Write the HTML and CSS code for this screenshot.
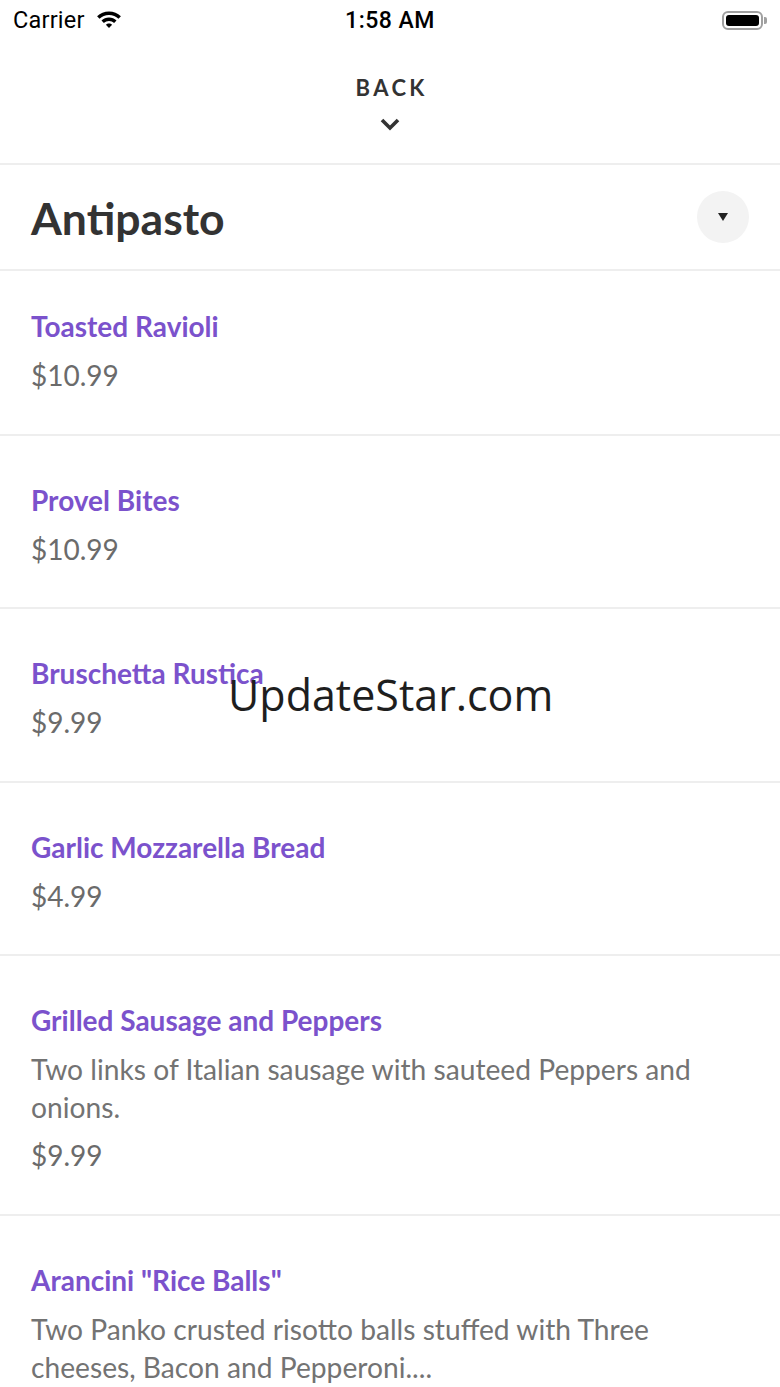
FILE: index.html
```html
<!DOCTYPE html>
<html lang="en">

<head>
    <meta charset="UTF-8">
    <meta name="viewport" content="width=device-width, initial-scale=1">
    <title>Menu - Antipasto</title>
    <link rel="stylesheet" href="styles.css">
</head>

<body>

    <!-- Barra de status -->
    <div class="status-bar">
        <div class="status-left">
            <span class="carrier">Carrier</span>
            <svg class="wifi" width="28" height="20" viewBox="0 0 28 20">
                <path d="M14 2.5c4.6 0 8.8 1.8 11.9 4.8l-2.4 2.5C21 7.4 17.7 6 14 6S7 7.4 4.5 9.8L2.1 7.3C5.2 4.3 9.4 2.5 14 2.5z" fill="#000" />
                <path d="M14 8.6c2.9 0 5.5 1.1 7.5 3l-2.4 2.5c-1.3-1.3-3.1-2-5.1-2s-3.8.7-5.1 2l-2.4-2.5c2-1.9 4.6-3 7.5-3z" fill="#000" />
                <path d="M14 14.6c1.2 0 2.3.5 3.1 1.2L14 19l-3.1-3.2c.8-.7 1.9-1.2 3.1-1.2z" fill="#000" />
            </svg>
        </div>
        <div class="status-time">1:58 AM</div>
        <div class="status-right">
            <div class="battery">
                <div class="battery-fill"></div>
            </div>
            <div class="battery-nub"></div>
        </div>
    </div>

    <!-- Voltar -->
    <div class="back-bar">
        <span class="back-label">BACK</span>
        <svg class="back-chevron" width="22" height="14" viewBox="0 0 22 14">
            <path d="M3 3l8 8 8-8" fill="none" stroke="#333" stroke-width="3.6" />
        </svg>
    </div>

    <!-- Categoria -->
    <div class="category-header">
        <h1 class="category-title">Antipasto</h1>
        <button class="category-toggle">
            <svg width="12" height="10" viewBox="0 0 12 10">
                <path d="M1 1h10L6 9z" fill="#222" />
            </svg>
        </button>
    </div>

    <div class="menu-list" id="menuList">
        <!-- Preenchido via JS -->
    </div>

    <div class="watermark">UpdateStar.com</div>

    <script>
        const items = [
            { nome: "Toasted Ravioli", preco: "$10.99" },
            { nome: "Provel Bites", preco: "$10.99" },
            { nome: "Bruschetta Rustica", preco: "$9.99" },
            { nome: "Garlic Mozzarella Bread", preco: "$4.99" },
            { nome: "Grilled Sausage and Peppers", desc: "Two links of Italian sausage with sauteed Peppers and onions.", preco: "$9.99" },
            { nome: "Arancini \"Rice Balls\"", desc: "Two Panko crusted risotto balls stuffed with Three cheeses, Bacon and Pepperoni....", preco: "$8.99" }
        ];

        function renderMenu(data) {
            const list = document.getElementById('menuList');
            list.innerHTML = '';
            data.forEach(item => {
                const nome = item.nome.replace(/"/g, '&quot;');
                list.innerHTML += `
          <div class="menu-item">
            <div class="item-name">${nome}</div>
            ${item.desc ? `<div class="item-desc">${item.desc}</div>` : ''}
            <div class="item-price">${item.preco}</div>
          </div>`;
            });
        }

        renderMenu(items);
    </script>

</body>

</html>
```

FILE: styles.css
```css
* {
    margin: 0;
    padding: 0;
    box-sizing: border-box;
}

body {
    font-family: 'Lato', 'Noto Sans', sans-serif;
    background: #ffffff;
    color: #333333;
    width: 780px;
    height: 1387px;
    overflow: hidden;
    position: relative;
}

.status-bar {
    height: 40px;
    display: flex;
    align-items: center;
    justify-content: space-between;
    padding: 0 13px;
    font-family: 'Roboto', 'Liberation Sans', sans-serif;
    color: #000000;
    position: relative;
}

.status-left {
    display: flex;
    align-items: center;
    gap: 10px;
}

.carrier {
    font-size: 23.5px;
    letter-spacing: 0.2px;
}

.wifi {
    margin-top: -2px;
}

.status-time {
    position: absolute;
    left: 0;
    right: 0;
    text-align: center;
    font-size: 23px;
    font-weight: 500;
    letter-spacing: 0.5px;
    pointer-events: none;
}

.status-right {
    display: flex;
    align-items: center;
    margin-right: 0;
}

.battery {
    width: 41px;
    height: 19px;
    border: 2px solid #a0a0a0;
    border-radius: 6px;
    padding: 2px;
}

.battery-fill {
    width: 100%;
    height: 100%;
    background: #000000;
    border-radius: 3px;
}

.battery-nub {
    width: 3px;
    height: 7px;
    background: #a0a0a0;
    border-radius: 0 2px 2px 0;
    margin-left: 1px;
}

.back-bar {
    height: 125px;
    display: flex;
    flex-direction: column;
    align-items: center;
    padding-top: 34px;
    border-bottom: 2px solid #eeeeee;
}

.back-label {
    font-size: 22px;
    font-weight: 700;
    letter-spacing: 3.4px;
    margin-right: -3.4px;
    color: #333333;
    line-height: 28px;
}

.back-chevron {
    margin-top: 15px;
}

.category-header {
    height: 106px;
    display: flex;
    align-items: center;
    justify-content: space-between;
    padding: 0 31px 0 31px;
    border-bottom: 2px solid #eeeeee;
}

.category-title {
    font-size: 44.5px;
    font-weight: 700;
    color: #333333;
}

.category-toggle {
    width: 52px;
    height: 52px;
    border-radius: 50%;
    border: none;
    background: #f3f3f3;
    display: flex;
    align-items: center;
    justify-content: center;
    margin-right: 0;
}

.menu-list {
    display: flex;
    flex-direction: column;
}

.menu-item {
    display: flex;
    flex-direction: column;
    padding: 44px 31px 39.6px;
    border-bottom: 2px solid #eeeeee;
}

.menu-item:first-child {
    padding-top: 35px;
}

.item-name {
    font-size: 28px;
    font-weight: 700;
    color: #7b52cc;
    line-height: 40px;
}

.item-desc {
    font-size: 28.2px;
    color: #737373;
    line-height: 38px;
    margin-top: 10px;
}

.item-price {
    font-size: 28px;
    color: #6b6b6b;
    line-height: 38px;
    margin-top: 10px;
}

.watermark {
    position: absolute;
    left: 228px;
    top: 666px;
    font-family: 'Open Sans', sans-serif;
    font-size: 43px;
    color: #1e1e1e;
    line-height: 58px;
    pointer-events: none;
}
```
